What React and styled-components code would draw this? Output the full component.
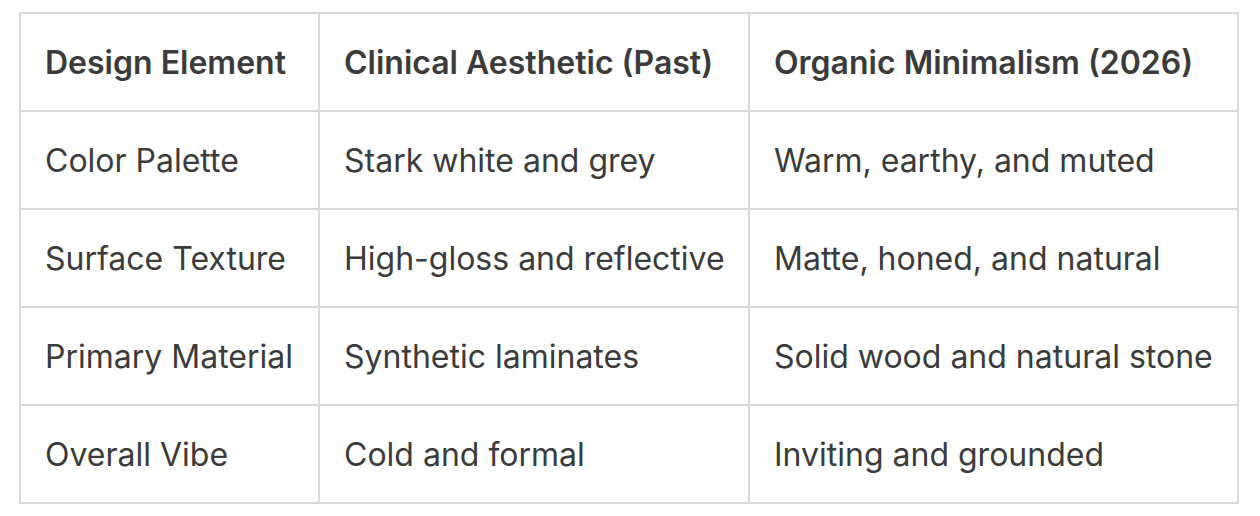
import React from 'react';
import styled, { createGlobalStyle } from 'styled-components';

const GlobalStyle = createGlobalStyle`
  body {
    margin: 0;
    background: #ffffff;
    font-family: Inter, 'Noto Sans', sans-serif;
  }
`;

const Page = styled.div`
  padding: 12px 0 0 19px;
`;

const Table = styled.table`
  width: 1218px;
  border-collapse: collapse;
  table-layout: fixed;
  color: #3b3b3b;
  font-size: 32px;
`;

const Row = styled.tr`
  height: 98px;
`;

const HeadCell = styled.th`
  border: 2px solid #d9d9d9;
  padding: 0 24px;
  text-align: left;
  font-weight: 600;
  white-space: nowrap;
`;

const Cell = styled.td`
  border: 2px solid #d9d9d9;
  padding: 0 24px;
  text-align: left;
  font-weight: 400;
  white-space: nowrap;
`;

const columns = [
  { title: 'Design Element', width: 299 },
  { title: 'Clinical Aesthetic (Past)', width: 430 },
  { title: 'Organic Minimalism (2026)', width: 489 },
];

const rows = [
  ['Color Palette', 'Stark white and grey', 'Warm, earthy, and muted'],
  ['Surface Texture', 'High-gloss and reflective', 'Matte, honed, and natural'],
  ['Primary Material', 'Synthetic laminates', 'Solid wood and natural stone'],
  ['Overall Vibe', 'Cold and formal', 'Inviting and grounded'],
];

export default function App() {
  return (
    <Page>
      <GlobalStyle />
      <Table>
        <colgroup>
          {columns.map((c) => (
            <col key={c.title} style={{ width: c.width }} />
          ))}
        </colgroup>
        <thead>
          <Row>
            {columns.map((c) => (
              <HeadCell key={c.title}>{c.title}</HeadCell>
            ))}
          </Row>
        </thead>
        <tbody>
          {rows.map((r) => (
            <Row key={r[0]}>
              {r.map((v) => (
                <Cell key={v}>{v}</Cell>
              ))}
            </Row>
          ))}
        </tbody>
      </Table>
    </Page>
  );
}
